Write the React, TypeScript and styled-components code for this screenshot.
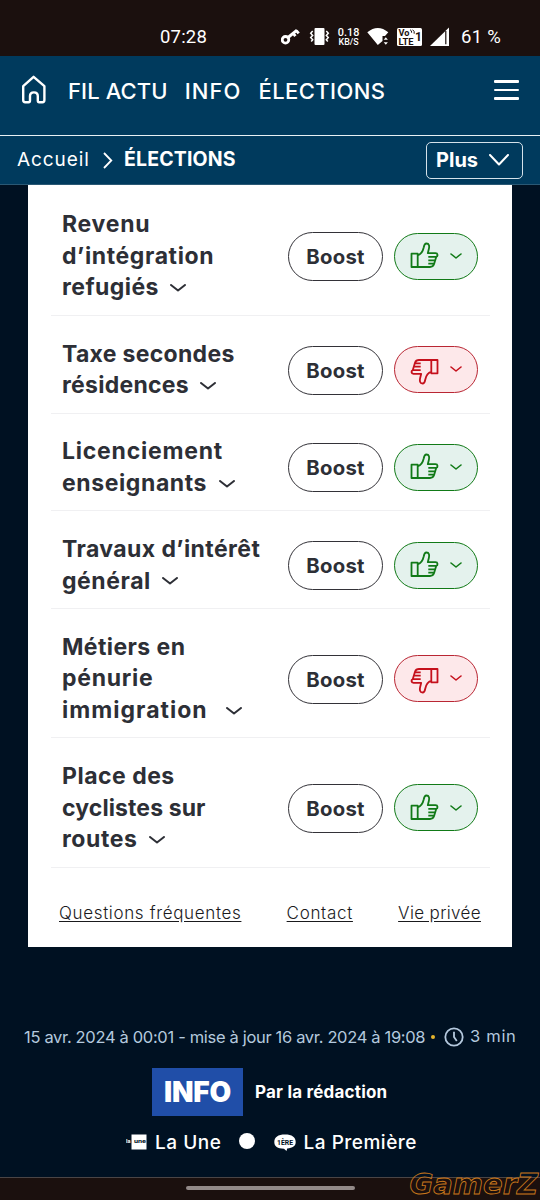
import styled, { createGlobalStyle } from "styled-components";

type Vote = "up" | "down";

interface Proposal {
  lines: { text: string; spacing: number }[];
  chevronGap?: number;
  vote: Vote;
}

const proposals: Proposal[] = [
  {
    lines: [
      { text: "Revenu", spacing: 0.75 },
      { text: "d’intégration", spacing: 0.62 },
      { text: "refugiés", spacing: 0.45 },
    ],
    vote: "up",
  },
  {
    lines: [
      { text: "Taxe secondes", spacing: 0.3 },
      { text: "résidences", spacing: 0.27 },
    ],
    vote: "down",
  },
  {
    lines: [
      { text: "Licenciement", spacing: 0.77 },
      { text: "enseignants", spacing: 0.6 },
    ],
    vote: "up",
  },
  {
    lines: [
      { text: "Travaux d’intérêt", spacing: 0.42 },
      { text: "général", spacing: 0.57 },
    ],
    vote: "up",
  },
  {
    lines: [
      { text: "Métiers en", spacing: 0.42 },
      { text: "pénurie", spacing: 0.75 },
      { text: "immigration", spacing: 1.02 },
    ],
    chevronGap: 18,
    vote: "down",
  },
  {
    lines: [
      { text: "Place des", spacing: 0.5 },
      { text: "cyclistes sur", spacing: 0.1 },
      { text: "routes", spacing: 0.57 },
    ],
    vote: "up",
  },
];

const StatusIcons = () => (
  <svg width="179" height="26" viewBox="1 0 179 26" fill="#fff">
    {/* key */}
    <circle cx="5.5" cy="15.8" r="3.3" fill="none" stroke="#fff" strokeWidth="2.8" />
    <path d="M8 13.5 17 6.2M13.2 9.4l2.2 2.7M16.3 6.6l2.4 2.8" fill="none" stroke="#fff" strokeWidth="2.9" />
    {/* vibrate */}
    <rect x="34.5" y="4" width="10" height="17" rx="1" />
    <path d="m32.7 7-2 2.2 2 2.2-2 2.2 2 2.2-1.5 1.8M46.3 7l2 2.2-2 2.2 2 2.2-2 2.2 1.5 1.8" fill="none" stroke="#fff" strokeWidth="1.5" />
    <SmallText x="57.8" y="12" textLength="21.5" lengthAdjust="spacingAndGlyphs" fontSize="11" fontWeight="500">0.18</SmallText>
    <SmallText x="58.6" y="20.6" textLength="20" lengthAdjust="spacingAndGlyphs" fontSize="8.6" fontWeight="500">KB/S</SmallText>
    {/* wifi */}
    <path d="M87.3 8.2Q97.8-.3 108.3 8.2L105 12h-2.5v5L97.8 21z" />
    <path d="m103.7 15.8 2.1-2.6 2.1 2.6zM103.7 18.2h4.2l-2.1 2.6z" />
    {/* VoLTE */}
    <rect x="117" y="4" width="25" height="18" rx="1.5" />
    <SmallText x="118.4" y="12" textLength="11" lengthAdjust="spacingAndGlyphs" fontSize="9" fill="#1b100e" fontWeight="700">Vo</SmallText>
    <path d="M130 5.7q2 .8 1.6 3M132.6 5.7q2.2 1.5 1.6 4" fill="none" stroke="#1b100e" />
    <SmallText x="118.5" y="20.6" textLength="15" lengthAdjust="spacingAndGlyphs" fontSize="9" fill="#1b100e" fontWeight="700">LTE</SmallText>
    <SmallText x="135" y="17.3" fontSize="12" fill="#1b100e" fontWeight="700">1</SmallText>
    {/* signal */}
    <path d="M150 22 169 3.5V22z" />
    <path d="M165.8 7v13.2" stroke="#1b100e" strokeWidth="1.2" />
  </svg>
);

const HomeIcon = () => (
  <svg width="26" height="32" viewBox="0 0 26 32" fill="none" stroke="#fff" strokeWidth="2.4" strokeLinejoin="round">
    <path d="M2.2 12.2 12.6 2.8 23.4 12.2V26q0 2.200-2 2.200h-3.200q-1.400 0-1.400-1.700v-4.400q0-3.700-3.900-3.700T9 22.100v4.400q0 1.700-1.400 1.700H4.200q-2 0-2-2.200z" />
  </svg>
);

const Chevron = ({ width = 16, height = 8, stroke = 2 }) => (
  <ChevronSvg width={width} height={height} viewBox={`0 0 ${width} ${height}`} strokeWidth={stroke}>
    <path d={`M1 1 ${width / 2} ${height - 1.5} ${width - 1} 1`} />
  </ChevronSvg>
);

const ThumbIcon = ({ vote }: { vote: Vote }) => (
  <Thumb width="29" height="28" viewBox="0 0 29 28" $vote={vote}>
    <path d="M1.5 11.7h6.2V25H1.5zM7.7 13.3c3.8-1.3 5.3-4.5 6-7.800.4-2.400.8-4 2.700-4 3 0 3 3.200 2.500 5.200l-1.100 4.500h7.700c2.500 0 2.600 3 .7 3.700L24 22.300c-.7 1.900-2 2.700-4 2.700H7.700M18.300 14.900h8M18.300 18.400h7M18.300 21.700h5.700" />
  </Thumb>
);

const App = () => {
  return (
    <Page>
      <GlobalStyle />
      <StatusBar>
        <Time>07:28</Time>
        <StatusIcons />
        <Battery>61 %</Battery>
      </StatusBar>

      <Nav>
        <HomeIcon />
        <NavLinks>
          <NavLink $spacing={0.1}>FIL ACTU</NavLink>
          <NavLink $spacing={1.1}>INFO</NavLink>
          <NavLink $spacing={0.4}>ÉLECTIONS</NavLink>
        </NavLinks>
        <Burger>
          <span />
          <span />
          <span />
        </Burger>
      </Nav>

      <Breadcrumb>
        <Crumb>Accueil</Crumb>
        <svg width="10" height="17" viewBox="0 0 10 17" fill="none" stroke="#fff" strokeWidth="1.8">
          <path d="m1 1 7.3 7.5L1 16" />
        </svg>
        <CurrentCrumb>ÉLECTIONS</CurrentCrumb>
        <MoreButton>
          <span>Plus</span>
          <Chevron width={20} height={12} stroke={2} />
        </MoreButton>
      </Breadcrumb>

      <Card>
        {proposals.map((proposal) => (
          <Row key={proposal.lines[0].text}>
            <Title>
              {proposal.lines.map((line, i) => (
                <TitleLine key={line.text} $gap={proposal.chevronGap ?? 11.5}>
                  <Tracked $spacing={line.spacing}>{line.text}</Tracked>
                  {i === proposal.lines.length - 1 && <Chevron />}
                </TitleLine>
              ))}
            </Title>
            <BoostButton>Boost</BoostButton>
            <VoteButton $vote={proposal.vote}>
              <ThumbIcon vote={proposal.vote} />
              <Chevron width={12} height={6.5} stroke={1.6} />
            </VoteButton>
          </Row>
        ))}
        <CardFooter>
          <FooterLink $spacing={0.65}>Questions fréquentes</FooterLink>
          <FooterLink $spacing={0.68}>Contact</FooterLink>
          <FooterLink $spacing={0.35}>Vie privée</FooterLink>
        </CardFooter>
      </Card>

      <ArticleMeta>
        <DateText>15 avr. 2024 à 00:01 - mise à jour 16 avr. 2024 à 19:08</DateText>
        <Dot />
        <svg width="20" height="20" viewBox="0 0 20 20" fill="none" stroke="#b4c9de" strokeWidth="1.8">
          <circle cx="10" cy="10" r="8.7" />
          <path d="M10 4.8V10l2.8 4" />
        </svg>
        <ReadTime>3 min</ReadTime>
      </ArticleMeta>

      <Author>
        <InfoBadge>INFO</InfoBadge>
        <AuthorName>Par la rédaction</AuthorName>
      </Author>

      <Channels>
        <svg width="21" height="16" viewBox="0 0 21 16">
          <rect x="5.5" y=".5" width="15" height="15" fill="#fff" />
          <SmallText x="0" y="9.3" fontSize="5.5" fontWeight="700" fill="#fff">la</SmallText>
          <SmallText x="8" y="9.3" fontSize="6" fontWeight="700" fill="#001122" textLength="12" lengthAdjust="spacingAndGlyphs">une</SmallText>
        </svg>
        <Channel $spacing={0.55}>La Une</Channel>
        <BigDot />
        <svg width="22" height="17" viewBox="0 0 22 17">
          <path d="M11 .5C18 .5 21.7 3 21.7 8c0 4-3 6-8.5 6.500L12.500 17 10 14.700C3.500 14.700.3 12.500.3 8 .3 3 4 .5 11 .5" fill="#fff" />
          <SmallText x="3" y="10.7" fontSize="7.5" fontWeight="700" fill="#001122" textLength="16" lengthAdjust="spacingAndGlyphs">1ÈRE</SmallText>
        </svg>
        <Channel $spacing={0.5}>La Première</Channel>
      </Channels>

      <BottomBar>
        <HomeIndicator />
        <Watermark>GamerZ</Watermark>
      </BottomBar>
    </Page>
  );
};

export default App;

const GlobalStyle = createGlobalStyle`
  * {
    box-sizing: border-box;
  }

  body {
    margin: 0;
    background: #001122;
  }

  button {
    font-family: inherit;
    padding: 0;
    margin: 0;
  }

  svg {
    flex-shrink: 0;
  }
`;

const Page = styled.div`
  display: flex;
  flex-direction: column;
  width: 540px;
  height: 1200px;
  overflow: hidden;
  background: #001122;
  color: #fff;
  font-family: Inter, "Open Sans", sans-serif;
  white-space: nowrap;
`;

const StatusBar = styled.header`
  display: flex;
  align-items: center;
  flex-shrink: 0;
  height: 56px;
  padding: 17px 0 0 160px;
  background: #1b100e;
  font-family: Roboto, sans-serif;
  font-size: 18.5px;
`;

const Time = styled.span`
  width: 121px;
  letter-spacing: 0.2px;
`;

const Battery = styled.span`
  margin-left: 1px;
  letter-spacing: 0.3px;
`;

const SmallText = styled.text`
  font-family: Roboto, sans-serif;
`;

const ChevronSvg = styled.svg`
  fill: none;
  stroke: currentColor;
  stroke-linecap: round;
  stroke-linejoin: round;
`;

const Nav = styled.nav`
  display: flex;
  align-items: center;
  flex-shrink: 0;
  height: 80px;
  padding: 0 21px 11px;
  background: #003a5d;
  border-bottom: 1px solid #e8f0f4;
`;

const NavLinks = styled.div`
  display: flex;
  gap: 17px;
  flex: 1;
  margin-left: 21px;
  padding-top: 2px;
`;

const NavLink = styled.a<{ $spacing: number }>`
  font-size: 22px;
  font-weight: 500;
  letter-spacing: ${(props) => props.$spacing}px;
`;

const Burger = styled.div`
  display: flex;
  flex-direction: column;
  gap: 6px;

  span {
    width: 25px;
    height: 2.5px;
    border-radius: 1px;
    background: #fff;
  }
`;

const Breadcrumb = styled.div`
  display: flex;
  align-items: center;
  flex-shrink: 0;
  height: 49px;
  padding: 0 17px;
  background: #003a5d;
  border-bottom: 1px solid #2a5874;
`;

const Crumb = styled.span`
  width: 86px;
  padding-bottom: 2px;
  font-size: 19px;
  letter-spacing: 0.9px;
`;

const CurrentCrumb = styled.strong`
  flex: 1;
  margin-left: 11px;
  padding-bottom: 2px;
  font-size: 19.5px;
  font-weight: 700;
  letter-spacing: 0.15px;
`;

const MoreButton = styled.button`
  display: flex;
  align-items: center;
  justify-content: space-between;
  width: 97px;
  height: 37px;
  padding: 0 13px 0 9px;
  border: 1px solid #d5e2ea;
  border-radius: 5px;
  background: none;
  color: #fff;
  font-size: 20px;
  font-weight: 700;
`;

const Card = styled.main`
  flex-shrink: 0;
  width: 484px;
  height: 762px;
  margin-left: 28px;
  padding: 1.7px 22px 0 23px;
  background: #fff;
  color: #2d2f36;
`;

const Row = styled.section`
  display: flex;
  align-items: center;
  padding: 22.8px 12px 11.2px 11px;
  border-bottom: 1px solid #f0f0f2;
`;

const Title = styled.h3`
  flex: 1;
  margin: 0;
  font-size: 23px;
  font-weight: 700;
  line-height: 31.4px;
`;

const TitleLine = styled.div<{ $gap: number }>`
  display: flex;
  align-items: center;
  gap: ${(props) => props.$gap}px;
`;

const Tracked = styled.span<{ $spacing: number }>`
  letter-spacing: ${(props) => props.$spacing}px;
`;

const BoostButton = styled.button`
  width: 95px;
  height: 49px;
  margin-right: 11px;
  border: 1px solid #333238;
  border-radius: 25px;
  background: #fff;
  color: #2d2f36;
  font-size: 20.3px;
  font-weight: 700;
  letter-spacing: 0.3px;
`;

const VoteButton = styled.button<{ $vote: Vote }>`
  display: flex;
  align-items: center;
  gap: 11.5px;
  width: 84px;
  height: 47px;
  margin-bottom: 1px;
  padding: 0 0 0 14.5px;
  border: 1px solid ${(props) => (props.$vote === "up" ? "#117a17" : "#b92633")};
  border-radius: 24px;
  background: ${(props) => (props.$vote === "up" ? "#e4f2ed" : "#fde8ea")};
  color: ${(props) => (props.$vote === "up" ? "#117a17" : "#c5101c")};
`;

const Thumb = styled.svg<{ $vote: Vote }>`
  fill: none;
  stroke: currentColor;
  stroke-width: 1.8;
  stroke-linejoin: round;
  transform: ${(props) => (props.$vote === "down" ? "translateY(1px) rotate(180deg)" : "none")};
`;

const CardFooter = styled.footer`
  display: flex;
  justify-content: space-between;
  padding: 34.3px 9px 0 8px;
`;

const FooterLink = styled.a<{ $spacing: number }>`
  color: #1a1a1d;
  font-size: 17px;
  font-weight: 300;
  line-height: 22px;
  letter-spacing: ${(props) => props.$spacing}px;
  text-decoration: underline;
  text-underline-offset: 2px;
`;

const ArticleMeta = styled.div`
  display: flex;
  align-items: center;
  height: 20px;
  margin: 80px 0 0 24px;
  color: #b4c9de;
  font-size: 16.5px;
`;

const DateText = styled.span`
  width: 407px;
  letter-spacing: -0.33px;
`;

const Dot = styled.i`
  width: 4px;
  height: 4px;
  margin-right: 9px;
  border-radius: 50%;
  background: #e5b52c;
`;

const ReadTime = styled.span`
  margin-left: 6px;
  padding-bottom: 2px;
  letter-spacing: 0.7px;
`;

const Author = styled.div`
  display: flex;
  align-items: center;
  margin: 21px 0 0 152px;
`;

const InfoBadge = styled.div`
  width: 91px;
  height: 48px;
  background: #204ea8;
  font-size: 28px;
  font-weight: 900;
  line-height: 48px;
  text-align: center;
  letter-spacing: -0.2px;
`;

const AuthorName = styled.strong`
  margin-left: 12px;
  padding-bottom: 1px;
  font-size: 17px;
  font-weight: 700;
  letter-spacing: 0.2px;
`;

const Channels = styled.div`
  display: flex;
  align-items: center;
  height: 24px;
  margin: 14px 0 0 126px;
`;

const Channel = styled.span<{ $spacing: number }>`
  margin-left: 8px;
  font-size: 19px;
  font-weight: 500;
  letter-spacing: ${(props) => props.$spacing}px;
`;

const BigDot = styled.i`
  width: 16px;
  height: 16px;
  margin: 0 19px 3px 17px;
  border-radius: 50%;
  background: #fff;
`;

const BottomBar = styled.div`
  position: relative;
  display: flex;
  justify-content: center;
  height: 23px;
  margin-top: auto;
  padding-top: 8px;
  border-top: 1px solid #4a4546;
  background: #1b100e;
`;

const HomeIndicator = styled.div`
  width: 169px;
  height: 4px;
  border-radius: 2px;
  background: #938a88;
`;

const Watermark = styled.span`
  position: absolute;
  right: 2px;
  bottom: 1px;
  color: transparent;
  font-family: "DejaVu Sans", sans-serif;
  font-size: 29px;
  font-style: italic;
  font-weight: 700;
  line-height: 29px;
  -webkit-text-stroke: 0.9px #c8781c;
`;
